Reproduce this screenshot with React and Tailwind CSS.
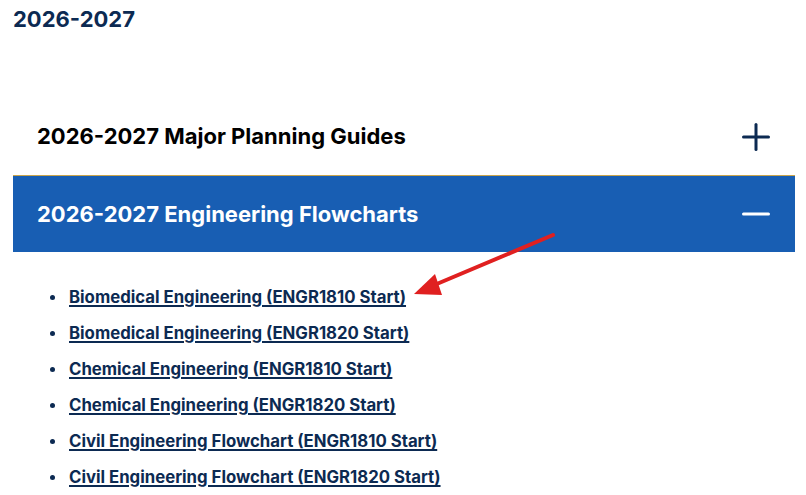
const links = [
  "Biomedical Engineering (ENGR1810 Start)",
  "Biomedical Engineering (ENGR1820 Start)",
  "Chemical Engineering (ENGR1810 Start)",
  "Chemical Engineering (ENGR1820 Start)",
  "Civil Engineering Flowchart (ENGR1810 Start)",
  "Civil Engineering Flowchart (ENGR1820 Start)",
];

const PlusIcon = ({ className }) => (
  <svg className={className} width="28" height="28" viewBox="0 0 28 28" fill="none" stroke="currentColor" strokeWidth="3" strokeLinecap="round">
    <line x1="14" y1="1.5" x2="14" y2="26.5" />
    <line x1="1.5" y1="14" x2="26.5" y2="14" />
  </svg>
);

const MinusIcon = ({ className }) => (
  <svg className={className} width="28" height="28" viewBox="0 0 28 28" fill="none" stroke="currentColor" strokeWidth="3" strokeLinecap="round">
    <line x1="1.5" y1="14" x2="26.5" y2="14" />
  </svg>
);

const App = () => {
  return (
    <div className="relative w-[806px] h-[495px] overflow-hidden bg-white font-['Inter',sans-serif]">
      <h2 className="pl-[13px] pt-[5px] text-[22px] font-bold leading-[28px] text-[#0c2a52]">2026-2027</h2>

      <div className="mt-[65px] pl-[13px] pr-[11px]">
        <div className="flex h-[77px] items-center justify-between pl-6 pr-[25px]">
          <span className="text-[22px] font-bold text-black">2026-2027 Major Planning Guides</span>
          <PlusIcon className="text-[#0c2a52]" />
        </div>
        <div className="flex h-[77px] items-center justify-between border-t border-[#c9a44c] bg-[#185eb3] pl-6 pr-[25px]">
          <span className="text-[22px] font-bold text-white">2026-2027 Engineering Flowcharts</span>
          <MinusIcon className="text-white" />
        </div>
      </div>

      <ul className="mt-[35px] pl-[50px]">
        {links.map((l) => (
          <li key={l} className="flex h-9 items-start gap-[14px] text-[16.75px] font-bold leading-5 text-[#0c2a52]">
            <span className="mt-[8px] h-[5px] w-[5px] shrink-0 rounded-full bg-[#0c2a52]" />
            <a href="#" className="underline decoration-[1.5px] underline-offset-2">{l}</a>
          </li>
        ))}
      </ul>

      <svg className="absolute left-0 top-0" width="806" height="495">
        <line x1="553" y1="235" x2="432" y2="286" stroke="#e02020" strokeWidth="4" strokeLinecap="round" />
        <polygon points="414,294 435,274 442,295" fill="#e02020" />
      </svg>
    </div>
  );
};

export default App;
